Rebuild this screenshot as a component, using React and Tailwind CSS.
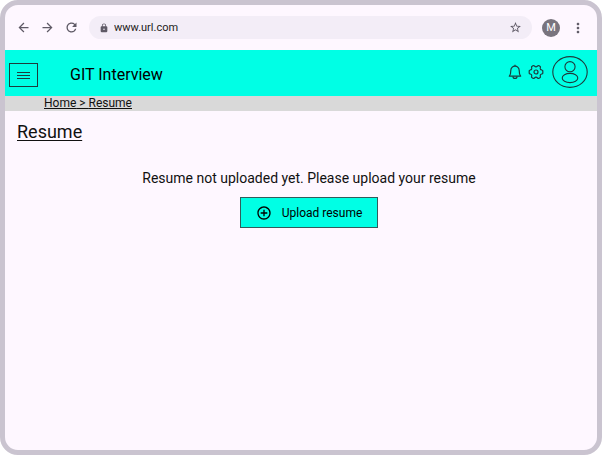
import { MdAddCircleOutline, MdArrowBack, MdArrowForward, MdLock, MdMoreVert, MdRefresh, MdStarBorder } from "react-icons/md";

function BrowserBar() {
  return (
    <div className="flex h-[45px] items-center pl-[11px] pr-[11px] text-[#5f5a66]">
      <div className="flex gap-[9px]">
        <button aria-label="Back"><MdArrowBack size={15} /></button>
        <button aria-label="Forward"><MdArrowForward size={15} /></button>
        <button aria-label="Reload"><MdRefresh size={15} /></button>
      </div>
      <div className="ml-[10px] flex h-[23px] min-w-0 flex-1 items-center rounded-full bg-[#f3edf7] px-[10px]">
        <MdLock size={10} />
        <input aria-label="Address" defaultValue="www.url.com" className="ml-[5px] min-w-0 flex-1 bg-transparent text-[11px] leading-4 text-[#1d1b20] outline-none" />
        <button aria-label="Bookmark"><MdStarBorder size={13} /></button>
      </div>
      <button aria-label="Profile" className="ml-[10px] flex size-[18px] items-center justify-center rounded-full bg-[#79747e] text-[11px] leading-none text-white">M</button>
      <button aria-label="More" className="ml-[10px]"><MdMoreVert size={16} /></button>
    </div>
  );
}

function BellIcon() {
  return (
    <svg viewBox="0 0 14 16" className="h-4 w-[14px]" fill="none" stroke="currentColor" strokeWidth="1.2" strokeLinejoin="round">
      <path d="M1.300 12.200C2.500 11 2.800 10 2.800 6.400a4.200 4.200 0 0 1 8.400 0c0 3.600.3 4.600 1.500 5.800z" />
      <path d="M5 12.400a2 2 0 0 0 4 0M7 .8v1.400" />
    </svg>
  );
}

function GearIcon() {
  return (
    <svg viewBox="0 0 16 16" className="size-4" fill="none" stroke="currentColor" strokeWidth="1.2" strokeLinejoin="round">
      <path d="M5.300 1.500C6.400 1.300 6.500 2.800 8 2.800s1.600-1.500 2.700-1.300l1.500.9c.8.8-.4 1.500.2 2.700.7 1.200 2 .6 2.400 1.700v2.400c-.4 1.100-1.700.5-2.400 1.700-.6 1.200.6 1.900-.2 2.700l-1.500.9C9.600 14.700 9.500 13.200 8 13.200s-1.600 1.500-2.700 1.300l-1.500-.9c-.8-.8.4-1.500-.2-2.700-.7-1.200-2-.6-2.400-1.700V6.800c.4-1.100 1.700-.5 2.400-1.700.6-1.200-.6-1.900.2-2.700z" />
      <circle cx="8" cy="8" r="2" />
    </svg>
  );
}

function AvatarIcon() {
  return (
    <svg viewBox="0 0 36 32" className="h-8 w-9" fill="none" stroke="currentColor" strokeWidth="1.100">
      <ellipse cx="18" cy="16" rx="17.200" ry="15.400" />
      <circle cx="18" cy="10.700" r="5.100" />
      <ellipse cx="18" cy="22" rx="7.800" ry="4.600" />
    </svg>
  );
}

function AppHeader() {
  return (
    <header className="flex h-[46px] items-center bg-[#00ffe5] pl-1 pr-[9px] text-[#1d3b3c]">
      <button aria-label="Menu" className="mt-1 flex h-6 w-[29px] items-center justify-center border border-current">
        <svg viewBox="0 0 13 9" className="h-[9px] w-[13px]" stroke="currentColor" strokeWidth="1">
          <path d="M0 1.500h13M0 4.500h13M0 7.500h13" />
        </svg>
      </button>
      <h1 className="ml-8 mt-1 flex-1 text-[16px] leading-5 text-black">GIT Interview</h1>
      <div className="mb-[2px] flex items-center gap-[6px]">
        <button aria-label="Notifications"><BellIcon /></button>
        <button aria-label="Settings"><GearIcon /></button>
        <button aria-label="Account" className="ml-[2px]"><AvatarIcon /></button>
      </div>
    </header>
  );
}

export default function App() {
  return (
    <div className="flex min-h-screen flex-col overflow-hidden rounded-[18px] border-[5px] border-[#cac4d0] bg-[#fef7ff] font-[Roboto,sans-serif] text-[#111111]">
      <BrowserBar />
      <AppHeader />
      <nav aria-label="Breadcrumb" className="bg-[#d9d9d9] pl-[39px] text-[12px] leading-[15px] underline">
        <a href="#home">Home</a> &gt; <a href="#resume">Resume</a>
      </nav>
      <main className="px-3 pt-[11px]">
        <h2 className="text-[18px] leading-5 underline underline-offset-2">Resume</h2>
        <section className="mt-[26px] flex flex-col items-center pl-4">
          <p className="text-[14px] leading-5">Resume not uploaded yet. Please upload your resume</p>
          <button className="mt-[9px] flex h-[31px] items-center border border-[#315c5c] bg-[#00ffe5] px-[15px] text-[12px] leading-4 text-black">
            <MdAddCircleOutline size={16} className="mr-[10px]" />
            Upload resume
          </button>
        </section>
      </main>
    </div>
  );
}
